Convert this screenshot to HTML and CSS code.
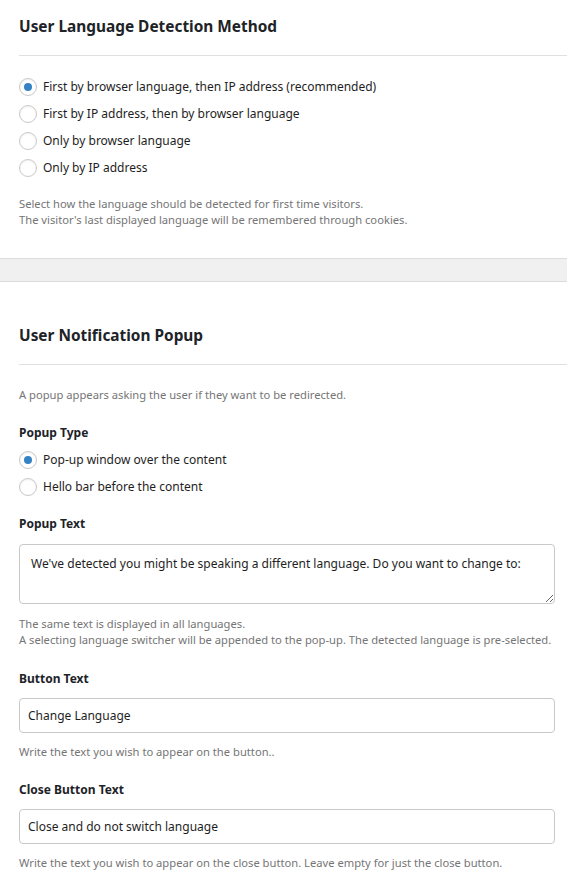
FILE: index.html
```html
<!DOCTYPE html>
<html>
<head>
<meta charset="utf-8">
<link rel="stylesheet" href="styles.css">
</head>
<body>
<section class="section first">
  <h2 class="title">User Language Detection Method</h2>
  <div class="divider"></div>
  <div class="radios">
    <label class="radio"><input type="radio" name="m" checked><span>First by browser language, then IP address (recommended)</span></label>
    <label class="radio"><input type="radio" name="m"><span>First by IP address, then by browser language</span></label>
    <label class="radio"><input type="radio" name="m"><span>Only by browser language</span></label>
    <label class="radio"><input type="radio" name="m"><span>Only by IP address</span></label>
  </div>
  <p class="help gap15">Select how the language should be detected for first time visitors.<br>The visitor's last displayed language will be remembered through cookies.</p>
</section>
<div class="band"></div>
<section class="section second">
  <h2 class="title">User Notification Popup</h2>
  <div class="divider"></div>
  <p class="help intro">A popup appears asking the user if they want to be redirected.</p>
  <div class="field">
    <div class="label">Popup Type</div>
    <div class="radios small">
      <label class="radio"><input type="radio" name="t" checked><span>Pop-up window over the content</span></label>
      <label class="radio"><input type="radio" name="t"><span>Hello bar before the content</span></label>
    </div>
  </div>
  <div class="field f16">
    <div class="label">Popup Text</div>
    <textarea class="area">We've detected you might be speaking a different language. Do you want to change to:</textarea>
    <p class="help h12">The same text is displayed in all languages.<br>A selecting language switcher will be appended to the pop-up. The detected language is pre-selected.</p>
  </div>
  <div class="field f23">
    <div class="label">Button Text</div>
    <input class="text" type="text" value="Change Language">
    <p class="help">Write the text you wish to appear on the button..</p>
  </div>
  <div class="field">
    <div class="label">Close Button Text</div>
    <input class="text" type="text" value="Close and do not switch language">
    <p class="help">Write the text you wish to appear on the close button. Leave empty for just the close button.</p>
  </div>
</section>
</body>
</html>
```
FILE: styles.css
```css
* { box-sizing: border-box; }
body {
  margin: 0;
  background: #fff;
  font-family: "Noto Sans", "Open Sans", sans-serif;
  font-size: 12px;
  color: #1e1e1e;
  width: 567px;
}
.section { padding-left: 19px; }
.section.first { padding-top: 17px; padding-bottom: 30px; }
.section.second { padding-top: 44px; padding-bottom: 20px; }
.title {
  margin: 0;
  font-size: 15.4px;
  line-height: 20px;
  font-weight: 700;
  color: #1d2327;
}
.divider {
  height: 1px;
  background: #e0e0e0;
  margin-top: 18px;
}
.radios { display: flex; flex-direction: column; margin-top: 17px; }
.radios.small { margin-top: 5px; }
.radio {
  display: flex;
  align-items: center;
  gap: 6px;
  height: 27px;
  line-height: 16px;
}
.radio input {
  appearance: none;
  -webkit-appearance: none;
  margin: 0;
  width: 18px;
  height: 18px;
  border-radius: 50%;
  border: 1px solid #c9c9c9;
  background: #fff;
  box-shadow: inset 0 1px 2px rgba(0,0,0,0.06);
  display: grid;
  place-items: center;
  flex: none;
}
.radio input:checked::before {
  content: "";
  width: 8px;
  height: 8px;
  border-radius: 50%;
  background: #3582c4;
}
.help {
  margin: 11px 0 0;
  font-size: 11.2px;
  line-height: 16px;
  color: #757575;
}
.help.gap15 { margin-top: 15px; }
.help.intro { margin-top: 22px; }
.help.h12 { margin-top: 12px; }
.band {
  height: 24px;
  background: #f0f0f0;
  border-top: 1px solid #dcdcdc;
  border-bottom: 1px solid #dcdcdc;
}
.field { margin-top: 22px; }
.field.f16 { margin-top: 16px; }
.field.f23 { margin-top: 23px; }
.label {
  font-weight: 700;
  font-size: 12px;
  line-height: 16px;
  color: #1d2327;
}
.area, .text {
  display: block;
  width: 536px;
  font-family: inherit;
  font-size: 12px;
  color: #1e1e1e;
  border: 1px solid #c9c9c9;
  border-radius: 4px;
  background: #fff;
  outline: none;
}
.area {
  margin-top: 12px;
  height: 60px;
  padding: 11px 11px;
  line-height: 16px;
  resize: vertical;
}
.text {
  margin-top: 11px;
  height: 35px;
  padding: 0 8px;
}
```
